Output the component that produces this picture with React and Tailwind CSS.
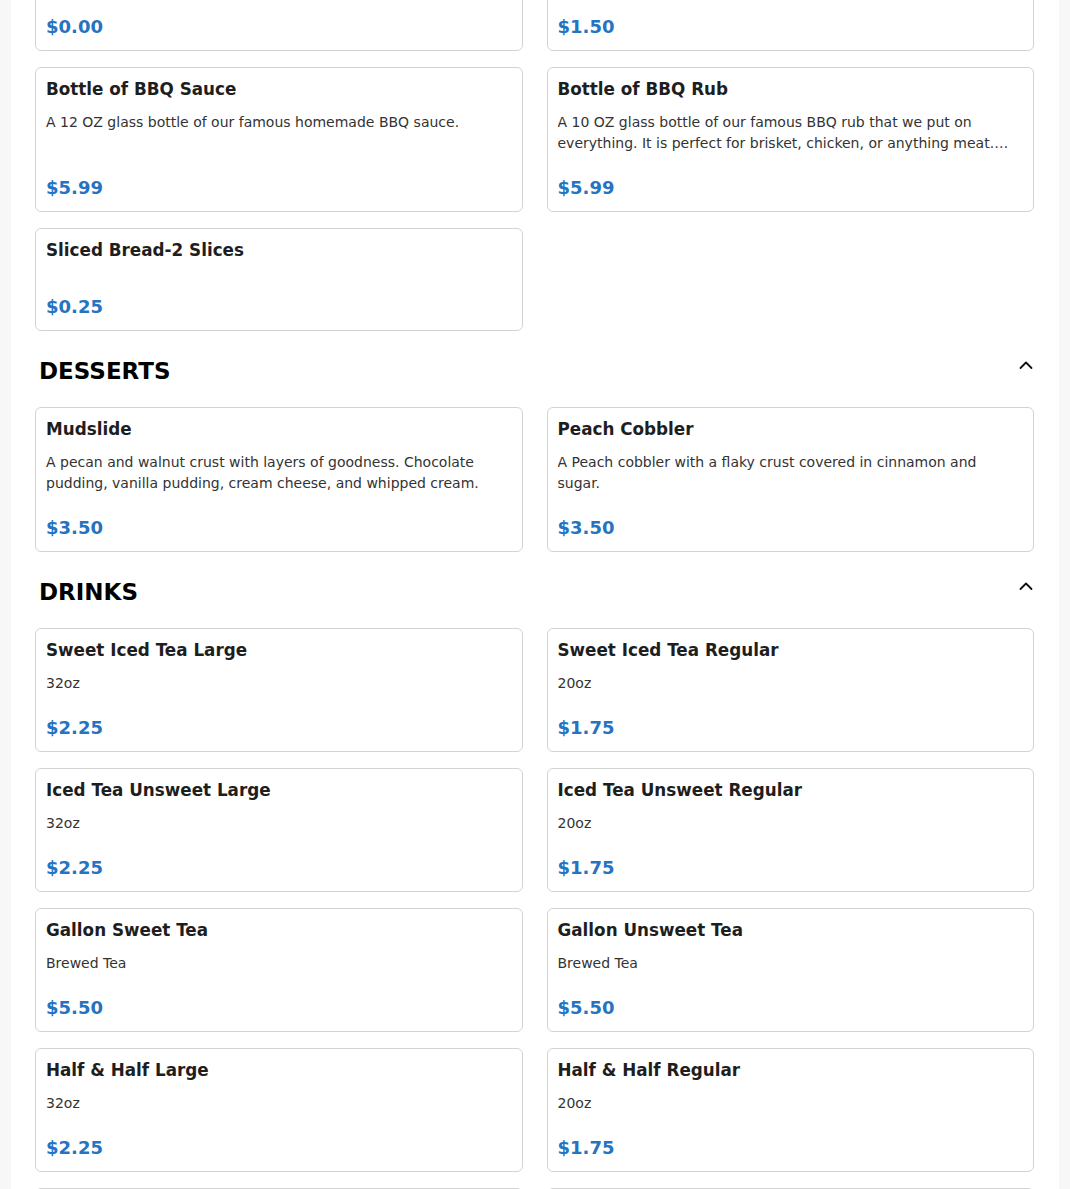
const SECTIONS = [
  {
    name: null,
    rows: [
      [
        { price: "$0.00", filler: true },
        { price: "$1.50", filler: true },
      ],
      [
        {
          title: "Bottle of BBQ Sauce",
          desc: "A 12 OZ glass bottle of our famous homemade BBQ sauce.",
          price: "$5.99",
        },
        {
          title: "Bottle of BBQ Rub",
          desc: "A 10 OZ glass bottle of our famous BBQ rub that we put on everything. It is perfect for brisket, chicken, or anything meat. Sprinkle it on and enjoy.",
          price: "$5.99",
        },
      ],
      [{ title: "Sliced Bread-2 Slices", desc: "", price: "$0.25" }],
    ],
  },
  {
    name: "DESSERTS",
    rows: [
      [
        {
          title: "Mudslide",
          desc: "A pecan and walnut crust with layers of goodness. Chocolate pudding, vanilla pudding, cream cheese, and whipped cream.",
          price: "$3.50",
        },
        {
          title: "Peach Cobbler",
          desc: "A Peach cobbler with a flaky crust covered in cinnamon and sugar.",
          price: "$3.50",
        },
      ],
    ],
  },
  {
    name: "DRINKS",
    rows: [
      [
        { title: "Sweet Iced Tea Large", desc: "32oz", price: "$2.25" },
        { title: "Sweet Iced Tea Regular", desc: "20oz", price: "$1.75" },
      ],
      [
        { title: "Iced Tea Unsweet Large", desc: "32oz", price: "$2.25" },
        { title: "Iced Tea Unsweet Regular", desc: "20oz", price: "$1.75" },
      ],
      [
        { title: "Gallon Sweet Tea", desc: "Brewed Tea", price: "$5.50" },
        { title: "Gallon Unsweet Tea", desc: "Brewed Tea", price: "$5.50" },
      ],
      [
        { title: "Half & Half Large", desc: "32oz", price: "$2.25" },
        { title: "Half & Half Regular", desc: "20oz", price: "$1.75" },
      ],
      [
        { title: "Lemonade Large", desc: "32oz", price: "$2.25" },
        { title: "Lemonade Regular", desc: "20oz", price: "$1.75" },
      ],
    ],
  },
]

function ChevronUp() {
  return (
    <svg width="16" height="10" viewBox="0 0 16 10" fill="none" className="mt-[5px] shrink-0">
      <polyline points="2.5,8 8,2.5 13.5,8" stroke="#111" strokeWidth="1.8" strokeLinecap="round" strokeLinejoin="round" />
    </svg>
  )
}

function ItemCard({ item }) {
  return (
    <div
      className={`flex flex-col rounded-md border border-[#d3d3d3] bg-white px-2.5 pt-2.5 pb-2.5 ${
        item.filler ? "min-h-[124px]" : ""
      }`}
    >
      {!item.filler && (
        <>
          <h3 className="text-[16.8px] font-bold leading-[22px] text-[#1e1e1e]">{item.title}</h3>
          <p className="mt-3 line-clamp-2 pr-2 text-sm leading-[21px] text-[#333]">{item.desc}</p>
        </>
      )}
      <p className="mt-auto pt-5 text-lg font-bold leading-[27px] text-[#2573c1]">{item.price}</p>
    </div>
  )
}

export default function App() {
  return (
    <div className="min-h-screen overflow-hidden bg-[#f7f7f7] font-['DejaVu_Sans',sans-serif]">
      <div className="mx-auto min-h-screen max-w-[1048px] bg-white pl-6 pr-[25px]">
        <div className="-mt-[73px] flex flex-col">
          {SECTIONS.map((section, si) => (
            <section key={si} className={si > 0 ? "mt-6" : ""}>
              {section.name && (
                <div className="mb-5 flex items-start justify-between pl-1">
                  <h2 className="text-[23px] font-bold leading-8 text-black">{section.name}</h2>
                  <ChevronUp />
                </div>
              )}
              <div className="flex flex-col gap-4">
                {section.rows.map((row, ri) => (
                  <div key={ri} className="grid grid-cols-2 gap-6">
                    {row.map((item, ii) => (
                      <ItemCard key={ii} item={item} />
                    ))}
                  </div>
                ))}
              </div>
            </section>
          ))}
        </div>
      </div>
    </div>
  )
}
